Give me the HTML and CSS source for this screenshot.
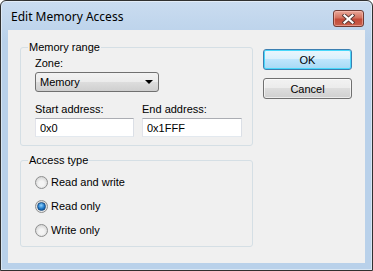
FILE: index.html
```html
<!DOCTYPE html>
<html lang="en">
<head>
    <meta charset="UTF-8">
    <title>Edit Memory Access</title>
    <link rel="stylesheet" href="styles.css">
</head>
<body>
    <div class="window">
        <div class="titlebar">
            <span class="title">Edit Memory Access</span>
            <button class="close" aria-label="Close">
                <svg width="13" height="10" viewBox="0 0 13 10">
                    <path d="M2.5 1.5 L10.5 8.5 M10.5 1.5 L2.5 8.5" stroke="#5a3a36" stroke-width="4" stroke-linecap="square"/>
                    <path d="M2.5 1.5 L10.5 8.5 M10.5 1.5 L2.5 8.5" stroke="#ffffff" stroke-width="2.2" stroke-linecap="square"/>
                </svg>
            </button>
        </div>
        <div class="client">
            <div class="groups">
                <fieldset class="group range">
                    <legend>Memory range</legend>
                    <div class="field-label">Zone:</div>
                    <div class="combo">
                        <span>Memory</span>
                        <span class="arrow"></span>
                    </div>
                    <div class="addr-row">
                        <div class="addr start">
                            <label for="start">Start address:</label>
                            <input class="text" id="start" type="text" value="0x0">
                        </div>
                        <div class="addr end">
                            <label for="end">End address:</label>
                            <input class="text" id="end" type="text" value="0x1FFF">
                        </div>
                    </div>
                </fieldset>
                <fieldset class="group access">
                    <legend>Access type</legend>
                    <label class="radio-row"><input type="radio" name="access">Read and write</label>
                    <label class="radio-row"><input type="radio" name="access" checked>Read only</label>
                    <label class="radio-row"><input type="radio" name="access">Write only</label>
                </fieldset>
            </div>
            <div class="buttons">
                <button class="btn default">OK</button>
                <button class="btn">Cancel</button>
            </div>
        </div>
    </div>
</body>
</html>
```

FILE: styles.css
```css
* {
    box-sizing: border-box;
}

body {
    margin: 0;
    font-family: 'Liberation Sans', Arial, sans-serif;
    font-size: 11px;
    color: #000;
}

.window {
    width: 373px;
    height: 271px;
    border: 1px solid #303030;
    border-radius: 6px 6px 0 0;
    background: linear-gradient(#cadcf0, #b9d1ea 40px);
    box-shadow: inset 0 0 0 1px rgba(255, 255, 255, 0.45);
    display: flex;
    flex-direction: column;
}

.titlebar {
    height: 29px;
    display: flex;
    align-items: flex-start;
    justify-content: space-between;
    padding: 0 8px 0 10px;
}

.title {
    font-family: 'Noto Sans', sans-serif;
    font-size: 12px;
    line-height: 16px;
    margin-top: 8px;
    color: #000;
}

.close {
    width: 31px;
    height: 17px;
    margin-top: 9px;
    padding: 0;
    border: 1px solid #6f3b34;
    border-radius: 3px;
    background: linear-gradient(#e9a99b, #d4725f 45%, #c34a38 55%, #c8604c);
    box-shadow: inset 0 0 0 1px rgba(255, 200, 190, 0.5);
    display: flex;
    align-items: center;
    justify-content: center;
}

.client {
    flex: 1;
    margin: 0 7px 7px 7px;
    background: #f0f0f0;
    display: flex;
    gap: 10px;
    padding: 11px 0 0 12px;
}

.groups {
    width: 233px;
    display: flex;
    flex-direction: column;
    gap: 8px;
}

.group {
    margin: 0;
    min-width: 0;
    border: 1px solid #d5dfe5;
    border-radius: 3px;
}

.group legend {
    line-height: 13px;
    padding: 0 1px;
    margin-left: -7px;
}

.range {
    padding: 3px 10px 8px 14px;
}

.field-label {
    line-height: 13px;
}

.combo {
    width: 124px;
    height: 20px;
    margin-top: 2px;
    border: 1px solid #707070;
    border-radius: 3px;
    background: linear-gradient(#f2f2f2, #ebebeb 50%, #dddddd 50%, #cfcfcf);
    display: flex;
    align-items: center;
    justify-content: space-between;
    padding: 0 5px 0 4px;
}

.arrow {
    width: 0;
    height: 0;
    border-left: 4px solid transparent;
    border-right: 4px solid transparent;
    border-top: 4px solid #000;
}

.addr-row {
    display: flex;
    gap: 8px;
    margin-top: 11px;
}

.addr label {
    display: block;
    line-height: 13px;
}

.addr.start {
    width: 99px;
}

.addr.end {
    width: 100px;
}

.text {
    display: block;
    width: 100%;
    height: 19px;
    margin: 2px 0 0 0;
    padding: 0 4px;
    font: inherit;
    border: 1px solid #e3e9ef;
    border-top-color: #abadb3;
    border-left-color: #e2e3ea;
    border-right-color: #dbdfe6;
    background: #fff;
    outline: none;
}

.access {
    padding: 3px 10px 4px 14px;
}

.radio-row {
    height: 24px;
    display: flex;
    align-items: center;
    line-height: 13px;
}

.radio-row input {
    appearance: none;
    width: 13px;
    height: 13px;
    margin: 0 3px 0 0;
    border: 1px solid #8e8f8f;
    border-radius: 50%;
    background: radial-gradient(circle at 50% 60%, #f4f4f4 30%, #d7d7d7 75%, #e6e6e6);
    display: flex;
    align-items: center;
    justify-content: center;
}

.radio-row input:checked::after {
    content: "";
    width: 7px;
    height: 7px;
    border-radius: 50%;
    border: 1px solid #1b4f84;
    background: radial-gradient(circle at 45% 35%, #8fd3ff, #1f78c8 55%, #0b3f7a);
}

.buttons {
    width: 89px;
    margin-top: 8px;
    display: flex;
    flex-direction: column;
    gap: 8px;
}

.btn {
    height: 21px;
    padding: 0;
    font: inherit;
    color: #000;
    border: 1px solid #707070;
    border-radius: 3px;
    background: linear-gradient(#f2f2f2, #ebebeb 50%, #dddddd 50%, #cfcfcf);
    box-shadow: inset 0 0 0 1px rgba(255, 255, 255, 0.6);
}

.btn.default {
    border-color: #3c7fb1;
    background: linear-gradient(#eaf6fd, #d9f0fc 50%, #bee6fd 50%, #a7d9f5);
    box-shadow: inset 0 0 0 1px #48d8fb;
}
```
